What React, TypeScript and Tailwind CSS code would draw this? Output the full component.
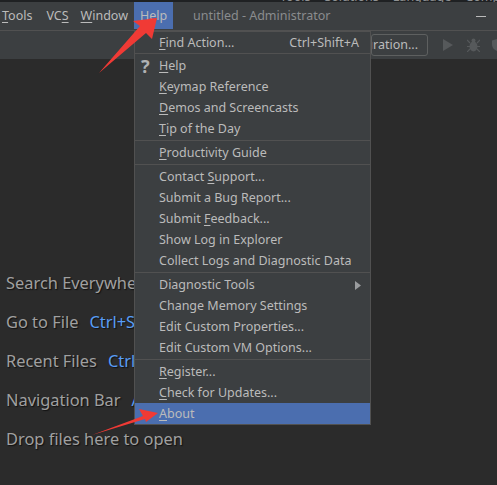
import React from "react";

const font = { fontFamily: '"Noto Sans", sans-serif' };

type Item = { label: React.ReactNode; right?: string; icon?: boolean; arrow?: boolean; active?: boolean };
const U = ({ children }: { children: React.ReactNode }) => <span className="underline underline-offset-2 decoration-1">{children}</span>;

const groups: Item[][] = [
  [{ label: <><U>F</U>ind Action...</>, right: "Ctrl+Shift+A" }],
  [
    { label: <><U>H</U>elp</>, icon: true },
    { label: <><U>K</U>eymap Reference</> },
    { label: <><U>D</U>emos and Screencasts</> },
    { label: <><U>T</U>ip of the Day</> },
  ],
  [{ label: <><U>P</U>roductivity Guide</> }],
  [
    { label: <>Contact <U>S</U>upport...</> },
    { label: <>Submit a Bug Report...</> },
    { label: <>Submit <U>F</U>eedback...</> },
    { label: <>Show Log in Explorer</> },
    { label: <>Collect Logs and Diagnostic Data</> },
  ],
  [
    { label: <>Diagnostic Tools</>, arrow: true },
    { label: <>Change Memory Settings</> },
    { label: <>Edit Custom Properties...</> },
    { label: <>Edit Custom VM Options...</> },
  ],
  [
    { label: <><U>R</U>egister...</> },
    { label: <><U>C</U>heck for Updates...</> },
    { label: <><U>A</U>bout</>, active: true },
  ],
];

function Row({ item }: { item: Item }) {
  return (
    <div className={`relative flex h-[21px] items-center pl-6 pr-[11px] pt-[1px] text-[12.5px] leading-[16px] ${item.active ? "bg-[#4b6eaf]" : ""}`}>
      {item.icon && <span className="absolute left-[6px] text-[18px] font-bold text-[#afb1b3]">?</span>}
      <span className="flex-1 whitespace-nowrap">{item.label}</span>
      {item.right && <span className="whitespace-nowrap">{item.right}</span>}
      {item.arrow && (
        <svg width="6" height="9" viewBox="0 0 6 9" className="-mr-[2px]"><path d="M0 0L6 4.5L0 9Z" fill="#9a9c9e" /></svg>
      )}
    </div>
  );
}

function Menu() {
  return (
    <div className="absolute left-[134px] top-[31px] w-[237px] border border-b-0 border-[#515151] bg-[#3c3f41] text-[#bbbbbb]">
      {groups.map((g, i) => (
        <div key={i} className={i > 0 ? `border-t border-[#515151] pt-[1px] ${i < groups.length - 1 ? "pb-[1px]" : "pb-0"}` : ""}>
          {g.map((it, j) => <Row key={j} item={it} />)}
        </div>
      ))}
      <div className="h-[1px] bg-[#515151]" />
    </div>
  );
}

function Hint({ label, keys, clip }: { label: string; keys?: string; clip?: boolean }) {
  return (
    <div className={`flex h-[39px] items-center gap-[11px] whitespace-nowrap text-[16.4px] text-[#a0a0a0] ${clip ? "w-[128px] overflow-hidden" : ""}`} style={{ textShadow: "1px 1px 1px #111" }}>
      <span>{label}</span>
      {keys && <span className="text-[#589df6]">{keys}</span>}
    </div>
  );
}

export default function App() {
  return (
    <div className="relative h-[485px] w-[497px] overflow-hidden bg-[#2b2b2b]" style={font}>
      <div className="flex h-[2px] items-end gap-[14px] overflow-hidden bg-[#1f2123] pl-[280px] text-[12.5px] leading-none text-[#8f9193] whitespace-nowrap">
        <span className="-mb-[1px]">Tools</span>
        <span className="-mb-[1px]">Solutions</span>
        <span className="-mb-[1px]">Language</span>
        <span className="-mb-[1px]">Comp</span>
      </div>
      <div className="flex h-[29px] items-start border-b border-[#515151] bg-[#3c3f41] text-[12.5px] text-[#bbbbbb]">
        <div className="flex h-[27px] items-center pl-[2px]">
          <span className="mr-[14px] pt-[1px]"><U>T</U>ools</span>
          <span className="mr-[12px] pt-[1px]">VC<U>S</U></span>
          <span className="mr-[6px] pt-[1px]"><U>W</U>indow</span>
          <span className="flex h-full w-[39px] items-center justify-center bg-[#4b6eaf] pt-[1px]"><U>H</U>elp</span>
        </div>
        <span className="ml-[20px] flex h-[27px] items-center pt-[1px] text-[12.5px] text-[#8a8c8e]">untitled - Administrator</span>
        <span className="ml-auto mr-[11px] mt-[14px] h-[1px] w-[10px] bg-[#bbbbbb]" />
      </div>
      <div className="flex h-[28px] items-center bg-[#3c3f41] pl-[371px] text-[12.5px] text-[#bbbbbb]">
        <div className="flex h-[22px] w-[57px] items-center justify-end overflow-hidden rounded-[3px] border border-[#5e6060] pr-[9px] whitespace-nowrap">uration...</div>
        <svg width="10" height="12" viewBox="0 0 10 12" className="ml-[15px]"><path d="M0 0L10 6L0 12Z" fill="#56595b" /></svg>
        <svg width="13" height="14" viewBox="0 0 13 14" className="ml-[14px]" fill="#56595b">
          <ellipse cx="6.5" cy="8.5" rx="4" ry="5" />
          <circle cx="6.5" cy="2.5" r="2" />
          <path d="M0 2l3 3M13 2l-3 3M0 8.5h13M0 14l3-3M13 14l-3-3" stroke="#56595b" strokeWidth="1.2" />
        </svg>
        <svg width="5" height="12" viewBox="0 0 5 12" className="ml-[12px]"><path d="M0 1.5L5 0V12C2 10.5 0 9 0 5Z" fill="#56595b" /></svg>
      </div>
      <div className="flex flex-col pl-[6px] pt-[205px]">
        <Hint clip label="Search Everywhere" />
        <Hint clip label="Go to File" keys="Ctrl+Shift+N" />
        <Hint clip label="Recent Files" keys="Ctrl+E" />
        <Hint clip label="Navigation Bar" keys="Alt+Home" />
        <Hint label="Drop files here to open" />
      </div>
      <Menu />
      <svg className="absolute left-0 top-0" width="497" height="485" viewBox="0 0 497 485">
        <path d="M99 73L140 26L133 21L149 19L150 18.5L157 18L152 39L146 33Z" fill="#f03a35" />
        <path d="M92 435L143 416L139 409L158 413L146 422L145 419Z" fill="#f03a35" />
      </svg>
    </div>
  );
}
